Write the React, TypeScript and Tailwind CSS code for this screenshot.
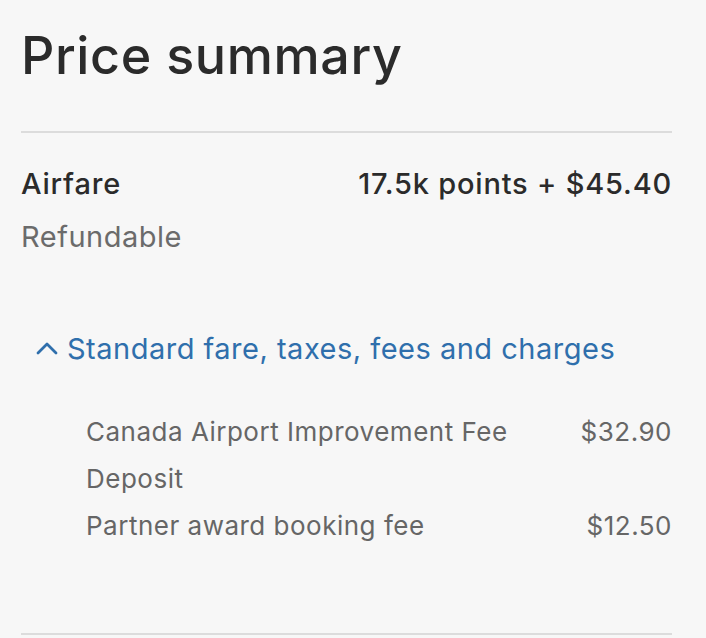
const fees = [
  { label: "Canada Airport Improvement Fee", amount: "$32.90" },
  { label: "Deposit", amount: "" },
  { label: "Partner award booking fee", amount: "$12.50" },
];

export default function App() {
  return (
    <div
      className="min-h-[638px] w-[706px] bg-[#f7f7f7] text-[#2b2b2b]"
      style={{ fontFamily: "Inter, 'Noto Sans', sans-serif" }}
    >
      <div className="pl-[21px] pr-[34px]">
        <h1 className="pt-[23px] text-[52px] font-medium leading-[66px] tracking-[0.6px]">
          Price summary
        </h1>
        <div className="mt-[42px] h-[2px] bg-[#dcdcdc]" />

        <div className="pt-[33px] text-[29px] leading-[36px] tracking-[0.5px]">
          <div className="flex items-baseline justify-between font-medium tracking-[0.8px]">
            <span>Airfare</span>
            <span>17.5k points + $45.40</span>
          </div>
          <p className="mt-[17px] text-[#6b6b6b]">Refundable</p>
        </div>

        <button
          type="button"
          className="mt-[76px] flex items-center gap-[9px] pl-[15px] text-[29px] leading-[36px] tracking-[0.5px] text-[#2f6fac]"
        >
          <svg width="22" height="14" viewBox="0 0 22 14" fill="none" className="mt-[-2px]">
            <polyline
              points="2,12 11,3 20,12"
              stroke="currentColor"
              strokeWidth="2.8"
              strokeLinecap="round"
              strokeLinejoin="round"
            />
          </svg>
          <span>Standard fare, taxes, fees and charges</span>
        </button>

        <div className="mt-[47px] flex flex-col gap-[11px] pl-[65px] text-[26px] leading-[36px] tracking-[0.5px] text-[#666666]">
          {fees.map((fee) => (
            <div key={fee.label} className="flex justify-between">
              <span>{fee.label}</span>
              <span>{fee.amount}</span>
            </div>
          ))}
        </div>

        <div className="mt-[89px] h-[2px] bg-[#dcdcdc]" />
      </div>
    </div>
  );
}
